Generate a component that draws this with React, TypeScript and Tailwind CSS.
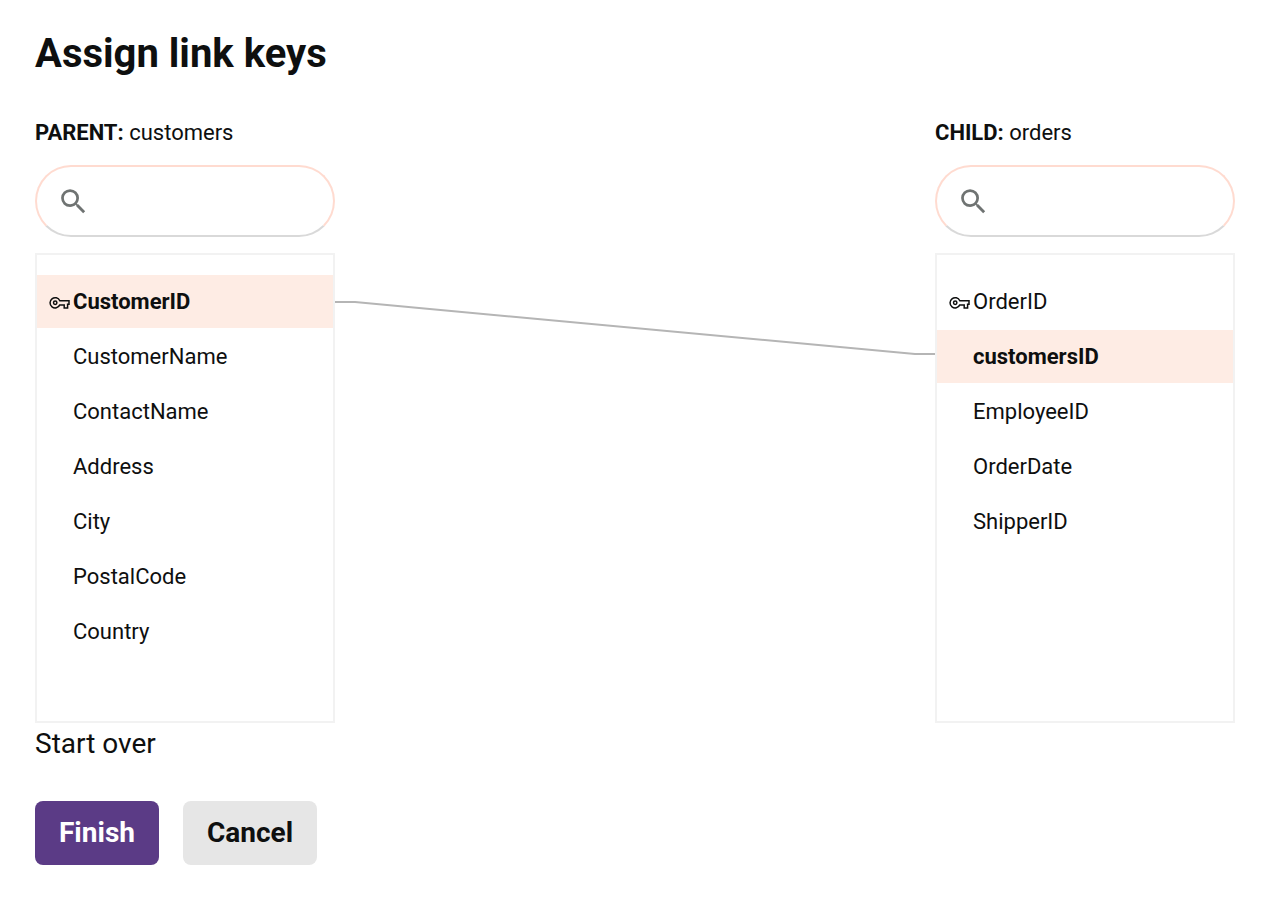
import { MdSearch } from "react-icons/md";

type Field = {
  name: string;
  primaryKey?: boolean;
  linked?: boolean;
};

type TableInfo = {
  role: string;
  name: string;
  fields: Field[];
};

const parentTable: TableInfo = {
  role: "PARENT",
  name: "customers",
  fields: [
    { name: "CustomerID", primaryKey: true, linked: true },
    { name: "CustomerName" },
    { name: "ContactName" },
    { name: "Address" },
    { name: "City" },
    { name: "PostalCode" },
    { name: "Country" },
  ],
};

const childTable: TableInfo = {
  role: "CHILD",
  name: "orders",
  fields: [
    { name: "OrderID", primaryKey: true },
    { name: "customersID", linked: true },
    { name: "EmployeeID" },
    { name: "OrderDate" },
    { name: "ShipperID" },
  ],
};

function KeyIcon() {
  return (
    <svg
      width={22}
      height={14}
      viewBox="0 0 22 14"
      fill="none"
      stroke="currentColor"
      strokeWidth={1.5}
      aria-hidden
    >
      <path d="M10.8 4.7H20V8.2H18.6V11.9H15.2V8.9H10.8A5.1 5.1 0 1 1 10.8 4.7Z" />
      <circle cx={6.2} cy={6.8} r={1.7} />
    </svg>
  );
}

function FieldRow({ field }: { field: Field }) {
  return (
    <li>
      <button
        type="button"
        aria-pressed={Boolean(field.linked)}
        className={`flex h-[53px] w-full items-center pl-3 text-left ${
          field.linked ? "bg-[#feece4] font-bold" : ""
        }`}
      >
        <span className="w-6 shrink-0 pt-[3px]">
          {field.primaryKey && <KeyIcon />}
        </span>
        {field.name}
      </button>
    </li>
  );
}

function FieldPicker({ table }: { table: TableInfo }) {
  const inputId = `search-${table.name}`;

  return (
    <section className="w-[300px] shrink-0">
      <label htmlFor={inputId} className="block leading-8">
        <strong className="font-bold">{table.role}:</strong> {table.name}
      </label>
      <div className="mt-4 flex h-[72px] items-center gap-2 rounded-full border-2 border-[#ffdbd0] border-b-[#d9d9d9] px-5">
        <MdSearch size={33} className="shrink-0 text-[#6f7372]" aria-hidden />
        <input
          id={inputId}
          type="search"
          className="min-w-0 flex-1 bg-transparent outline-none"
        />
      </div>
      <ul className="mt-4 flex h-[470px] flex-col gap-0.5 overflow-auto border-2 border-[#f2f2f2] py-5">
        {table.fields.map((field) => (
          <FieldRow key={field.name} field={field} />
        ))}
      </ul>
    </section>
  );
}

function Connector({ from, to }: { from: number; to: number }) {
  return (
    <svg
      viewBox="0 0 600 470"
      preserveAspectRatio="none"
      fill="none"
      stroke="#b5b5b5"
      strokeWidth={2}
      aria-hidden
      className="h-[470px] min-w-0 flex-1"
    >
      <path
        d={`M0 ${from} H20 L580 ${to} H600`}
        vectorEffect="non-scaling-stroke"
      />
    </svg>
  );
}

export default function App() {
  return (
    <main className="min-h-screen bg-white px-[35px] py-[30px] font-['Roboto',sans-serif] text-[22px] text-[#0e0f0f]">
      <h1 className="text-[40px] leading-12 font-bold">Assign link keys</h1>

      <div className="mt-[39px] flex items-end">
        <FieldPicker table={parentTable} />
        <Connector from={49} to={101} />
        <FieldPicker table={childTable} />
      </div>

      <button type="button" className="mt-[3px] block text-[28px] leading-9">
        Start over
      </button>

      <div className="mt-[39px] flex gap-6 text-[28px] font-bold">
        <button
          type="button"
          className="h-16 rounded-lg bg-[#5b3b86] px-6 text-white"
        >
          Finish
        </button>
        <button type="button" className="h-16 rounded-lg bg-[#e6e6e6] px-6">
          Cancel
        </button>
      </div>
    </main>
  );
}
